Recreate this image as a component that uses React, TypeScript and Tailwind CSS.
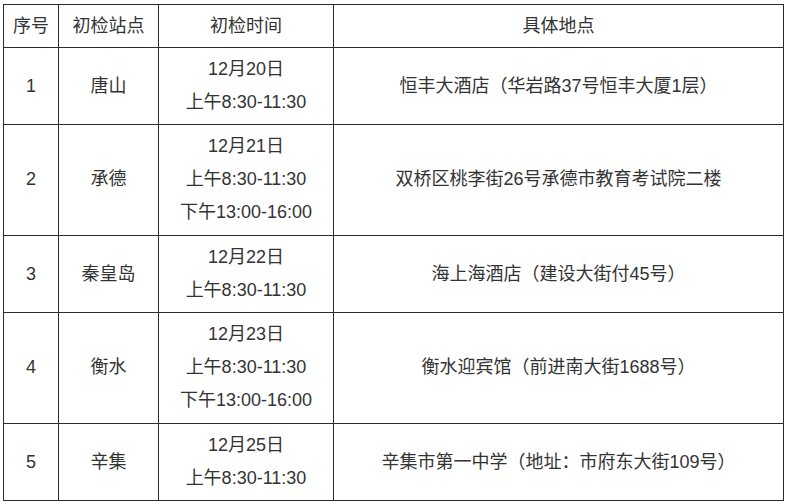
const rows = [
  { no: "1", site: "唐山", times: ["12月20日", "上午8:30-11:30"], place: "恒丰大酒店（华岩路37号恒丰大厦1层）" },
  { no: "2", site: "承德", times: ["12月21日", "上午8:30-11:30", "下午13:00-16:00"], place: "双桥区桃李街26号承德市教育考试院二楼" },
  { no: "3", site: "秦皇岛", times: ["12月22日", "上午8:30-11:30"], place: "海上海酒店（建设大街付45号）" },
  { no: "4", site: "衡水", times: ["12月23日", "上午8:30-11:30", "下午13:00-16:00"], place: "衡水迎宾馆（前进南大街1688号）" },
  { no: "5", site: "辛集", times: ["12月25日", "上午8:30-11:30"], place: "辛集市第一中学（地址：市府东大街109号）" },
];

const cell = "border border-[#2b2b2b] text-center align-middle px-1";

export default function App() {
  return (
    <div
      className="bg-white w-[786px] h-[504px] pt-[4px] pl-[3px] text-[#333] text-[18px] leading-[33px]"
      style={{ fontFamily: '"Liberation Sans", "Noto Sans CJK SC", sans-serif' }}
    >
      <table className="border-collapse table-fixed w-[780px]">
        <colgroup>
          <col className="w-[55px]" />
          <col className="w-[100px]" />
          <col className="w-[175px]" />
          <col className="w-[450px]" />
        </colgroup>
        <thead>
          <tr>
            <th className={`${cell} font-normal pt-[5px] pb-[4px]`}>序号</th>
            <th className={`${cell} font-normal pt-[5px] pb-[4px]`}>初检站点</th>
            <th className={`${cell} font-normal pt-[5px] pb-[4px]`}>初检时间</th>
            <th className={`${cell} font-normal pt-[5px] pb-[4px]`}>具体地点</th>
          </tr>
        </thead>
        <tbody>
          {rows.map((r) => {
            const pad = r.times.length > 2 ? "pt-[5px] pb-[6px]" : "py-[5px]";
            return (
              <tr key={r.no}>
                <td className={`${cell} ${pad}`}>{r.no}</td>
                <td className={`${cell} ${pad}`}>{r.site}</td>
                <td className={`${cell} ${pad}`}>
                  {r.times.map((t) => (
                    <div key={t}>{t}</div>
                  ))}
                </td>
                <td className={`${cell} ${pad}`}>{r.place}</td>
              </tr>
            );
          })}
        </tbody>
      </table>
    </div>
  );
}
